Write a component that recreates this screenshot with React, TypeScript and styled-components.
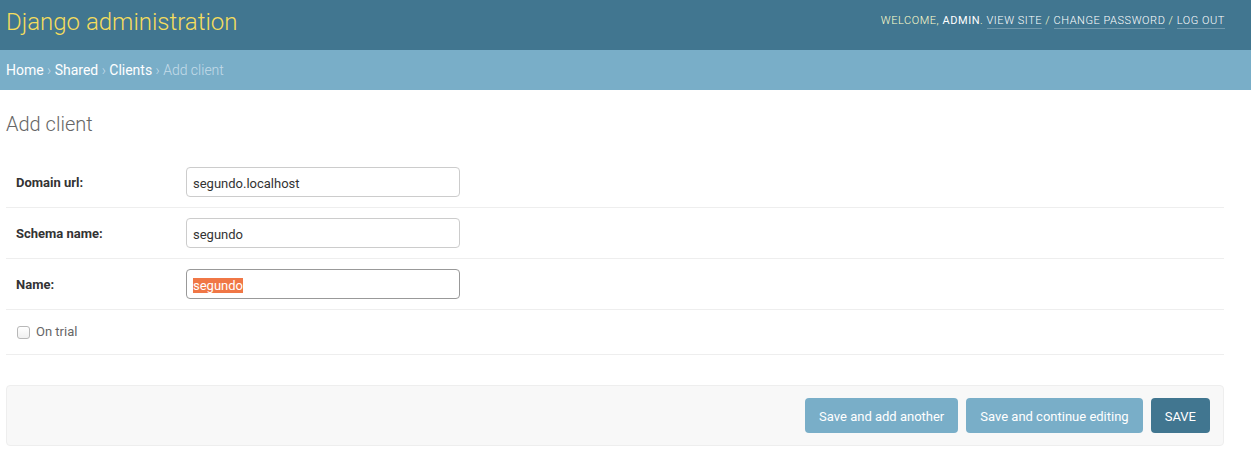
import React, {useEffect, useRef} from "react";
import styled, {createGlobalStyle} from "styled-components";

const GlobalStyle = createGlobalStyle`
  html, body {
    margin: 0;
    padding: 0;
    background: #fff;
  }
  body {
    font-family: Roboto, "Lucida Grande", Verdana, Arial, sans-serif;
    font-size: 14px;
    color: #333;
  }
`

const Header = styled.div`
  display: flex;
  align-items: flex-start;
  justify-content: space-between;
  height: 50px;
  box-sizing: border-box;
  padding: 0 26px 0 6px;
  background: #417690;
`

const Branding = styled.h1`
  margin: 8px 0 0 0;
  font-size: 24px;
  line-height: 28px;
  font-weight: 300;
  color: #f5dd5d;
`

const UserTools = styled.div`
  margin-top: 14px;
  font-size: 11px;
  line-height: 14px;
  letter-spacing: 0.55px;
  font-weight: 300;
  text-transform: uppercase;
  color: #ffc;
`

const Strong = styled.strong`
  font-weight: 400;
  color: #fff;
`

const ToolLink = styled.a`
  color: #fff;
  text-decoration: none;
  border-bottom: 1px solid rgba(255, 255, 255, 0.25);
  padding-bottom: 1px;
`

const Breadcrumbs = styled.div`
  height: 40px;
  box-sizing: border-box;
  padding: 10px 6px;
  background: #79aec8;
  color: #c4dce8;
  font-size: 14px;
  line-height: 20px;
  font-weight: 300;
`

const Crumb = styled.a`
  color: #fff;
  font-weight: 400;
  text-decoration: none;
`

const Content = styled.div`
  padding: 21px 27px 20px 6px;
`

const Title = styled.h1`
  margin: 0 0 20px 0;
  font-size: 20px;
  line-height: 26px;
  font-weight: 300;
  color: #666;
`

const Fieldset = styled.div`
  display: flex;
  flex-direction: column;
`

const Row = styled.div`
  display: flex;
  align-items: flex-start;
  padding: 10px;
  border-bottom: 1px solid #eee;
`

const Label = styled.label`
  width: 160px;
  padding: 8px 10px 0 0;
  font-size: 13px;
  line-height: 16px;
  font-weight: 700;
  color: #333;
`

const TextInput = styled.input<{$focused?: boolean}>`
  width: 274px;
  height: 30px;
  box-sizing: border-box;
  margin: 0;
  padding: 6px 6px 4px;
  border: 1px solid ${p => (p.$focused ? "#999" : "#ccc")};
  border-radius: 4px;
  font-family: Roboto, Arial, sans-serif;
  font-size: 13px;
  color: #333;
  background: #fff;
  outline: none;

  &::selection {
    background: #f07746;
    color: #fff;
  }
`

const CheckRow = styled(Row)`
  align-items: center;
  height: 45px;
  box-sizing: border-box;
  padding: 0 10px;
`

const Check = styled.input`
  appearance: none;
  width: 13px;
  height: 13px;
  box-sizing: border-box;
  margin: 0 6px 0 1px;
  border: 1px solid #b8b8b8;
  border-radius: 3px;
  background: linear-gradient(#fff, #f0f0f0);
`

const CheckLabel = styled.label`
  font-size: 13px;
  color: #666;
  line-height: 16px;
`

const SubmitRow = styled.div`
  display: flex;
  justify-content: flex-end;
  gap: 8px;
  margin-top: 30px;
  padding: 12px 13px;
  background: #f8f8f8;
  border: 1px solid #eee;
  border-radius: 4px;
`

const Button = styled.button<{$primary?: boolean}>`
  height: 35px;
  padding: 1px 14px 0;
  border: none;
  border-radius: 4px;
  background: ${p => (p.$primary ? "#417690" : "#79aec8")};
  color: #fff;
  font-family: Roboto, Arial, sans-serif;
  font-size: 13px;
  font-weight: 400;
  cursor: pointer;
`

export default function App() {
    const nameRef = useRef<HTMLInputElement>(null)

    useEffect(() => {
        const el = nameRef.current
        if (el) {
            el.focus()
            el.setSelectionRange(0, el.value.length)
        }
    }, [])

    return (
        <>
            <GlobalStyle/>
            <Header>
                <Branding>Django administration</Branding>
                <UserTools>
                    Welcome, <Strong>admin</Strong>. <ToolLink href="#">View site</ToolLink> / <ToolLink
                    href="#">Change password</ToolLink> / <ToolLink href="#">Log out</ToolLink>
                </UserTools>
            </Header>
            <Breadcrumbs>
                <Crumb href="#">Home</Crumb> › <Crumb href="#">Shared</Crumb> › <Crumb
                href="#">Clients</Crumb> › Add client
            </Breadcrumbs>
            <Content>
                <Title>Add client</Title>
                <Fieldset>
                    <Row>
                        <Label htmlFor="domain">Domain url:</Label>
                        <TextInput id="domain" defaultValue="segundo.localhost"/>
                    </Row>
                    <Row>
                        <Label htmlFor="schema">Schema name:</Label>
                        <TextInput id="schema" defaultValue="segundo"/>
                    </Row>
                    <Row>
                        <Label htmlFor="name">Name:</Label>
                        <TextInput id="name" ref={nameRef} $focused defaultValue="segundo"/>
                    </Row>
                    <CheckRow>
                        <Check type="checkbox" id="trial"/>
                        <CheckLabel htmlFor="trial">On trial</CheckLabel>
                    </CheckRow>
                </Fieldset>
                <SubmitRow>
                    <Button>Save and add another</Button>
                    <Button>Save and continue editing</Button>
                    <Button $primary>SAVE</Button>
                </SubmitRow>
            </Content>
        </>
    )
}
